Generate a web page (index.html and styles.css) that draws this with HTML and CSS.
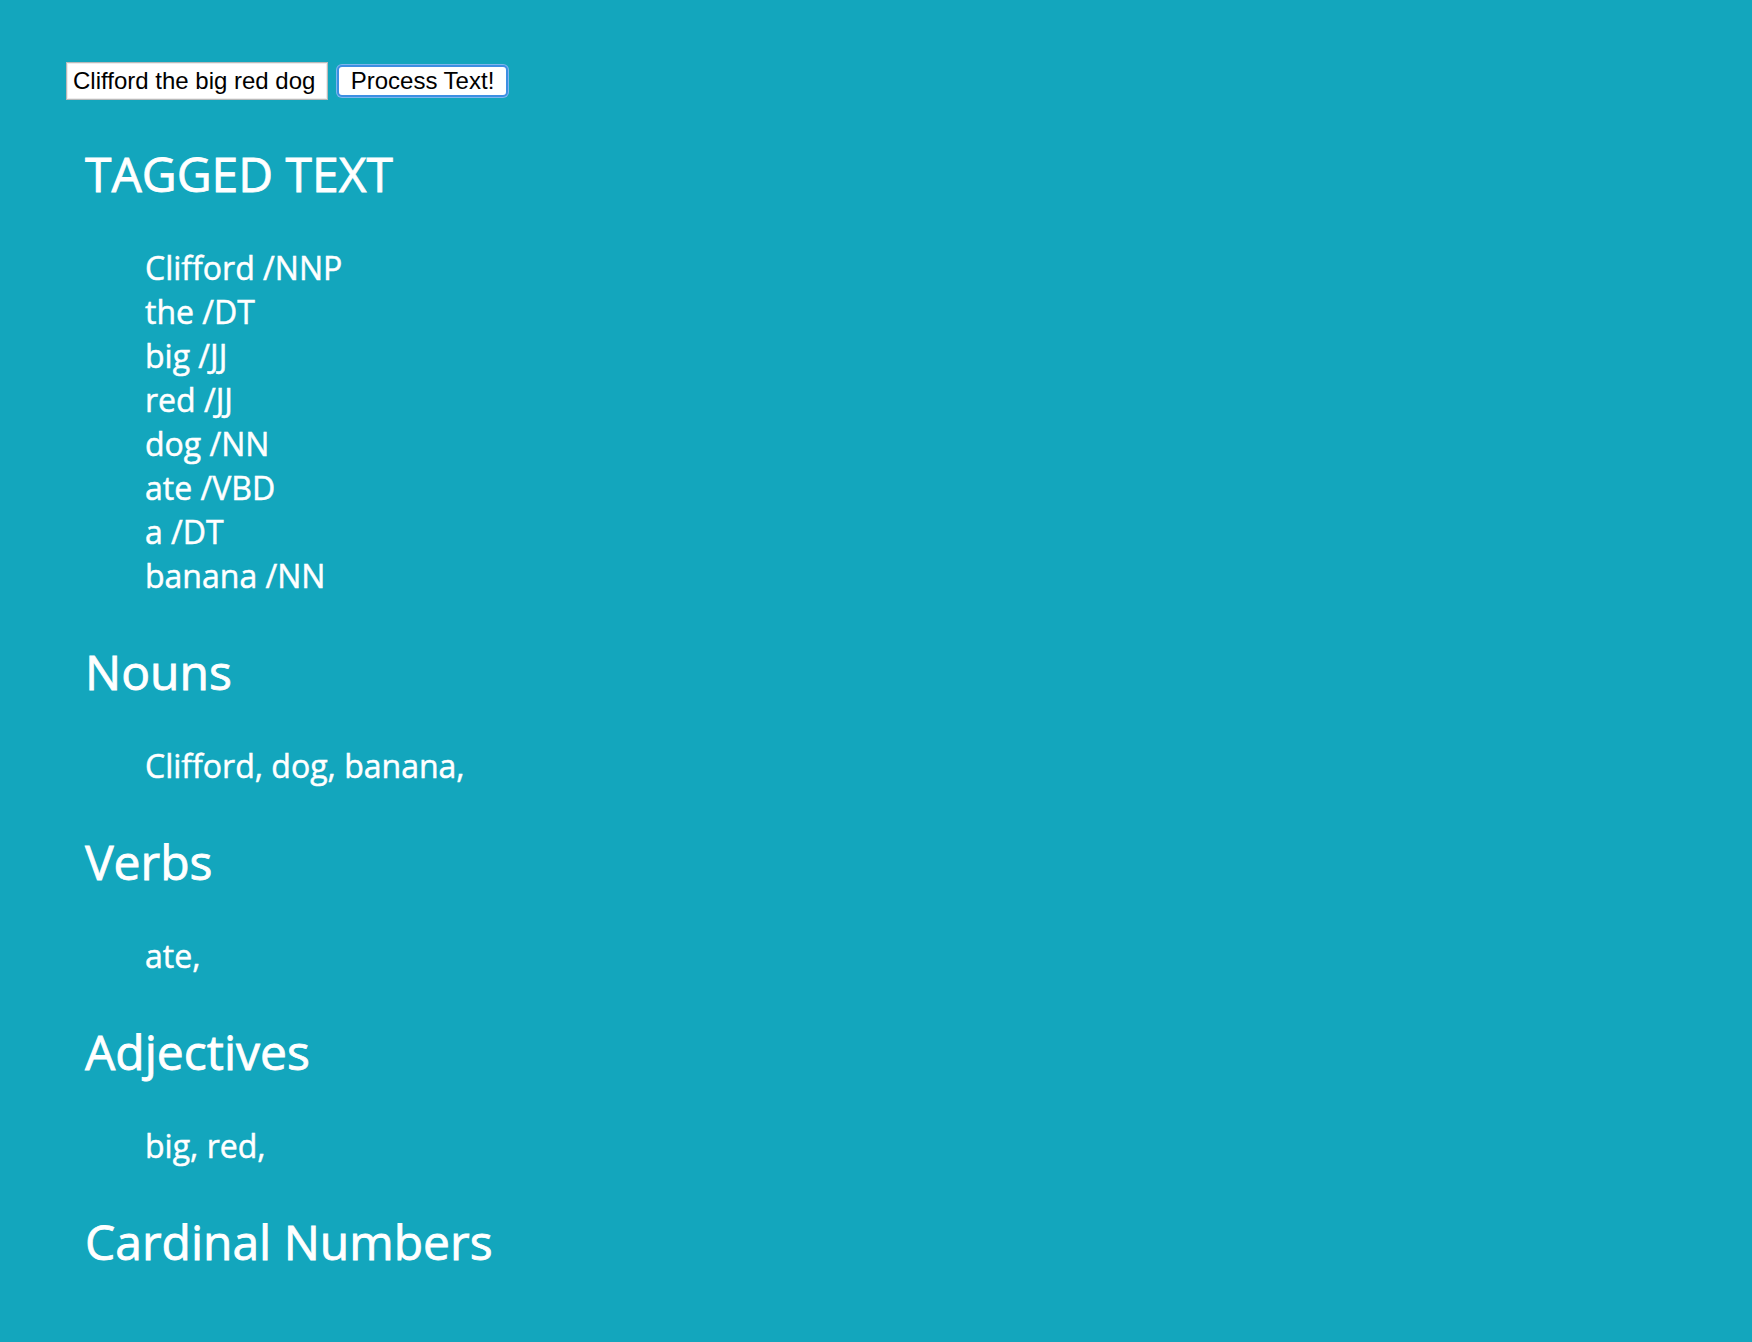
FILE: index.html
```html
<!DOCTYPE html>
<html lang="en">
<head>
<meta charset="utf-8">
<title>POS Tagger</title>
<link rel="stylesheet" href="styles.css">
</head>
<body>
<form class="form">
  <input class="text-input" type="text" value="Clifford the big red dog">
  <button class="btn" type="button">Process Text!</button>
</form>
<main class="results">
  <section class="section">
    <h2 class="heading">TAGGED TEXT</h2>
    <div class="content">
      <div class="line">Clifford /NNP</div>
      <div class="line">the /DT</div>
      <div class="line">big /JJ</div>
      <div class="line">red /JJ</div>
      <div class="line">dog /NN</div>
      <div class="line">ate /VBD</div>
      <div class="line">a /DT</div>
      <div class="line">banana /NN</div>
    </div>
  </section>
  <section class="section">
    <h2 class="heading">Nouns</h2>
    <div class="content"><div class="line">Clifford, dog, banana,</div></div>
  </section>
  <section class="section">
    <h2 class="heading">Verbs</h2>
    <div class="content"><div class="line">ate,</div></div>
  </section>
  <section class="section">
    <h2 class="heading">Adjectives</h2>
    <div class="content"><div class="line">big, red,</div></div>
  </section>
  <section class="section">
    <h2 class="heading">Cardinal Numbers</h2>
  </section>
</main>
</body>
</html>
```

FILE: styles.css
```css
html, body {
  margin: 0;
  padding: 0;
}
body {
  background: #13a6bd;
  color: #ffffff;
  font-family: "Open Sans", "Noto Sans", sans-serif;
  min-height: 1342px;
}
.form {
  display: flex;
  align-items: center;
  gap: 9px;
  padding: 62px 0 0 66px;
  margin: 0;
}
.text-input {
  box-sizing: border-box;
  width: 262px;
  height: 38px;
  padding: 0 6px;
  border: 1px solid #b9b9b9;
  box-shadow: inset 0 0 0 1px #ececec;
  background: #fff;
  color: #000;
  font-family: "Liberation Sans", Arial, sans-serif;
  font-size: 24px;
  outline: none;
}
.btn {
  box-sizing: border-box;
  width: 171px;
  height: 32px;
  padding: 0;
  border: 2px solid #3d8fe3;
  border-radius: 5px;
  box-shadow: 0 0 0 1px #7fb6ee;
  background: #fff;
  color: #000;
  font-family: "Liberation Sans", Arial, sans-serif;
  font-size: 24px;
  line-height: 28px;
}
.results {
  padding: 40px 0 0 85px;
  -webkit-text-stroke: 0.5px #ffffff;
}
.section {
  margin: 0;
}
.heading {
  margin: 0 0 38px 0;
  font-size: 48px;
  font-weight: 400;
  line-height: 68px;
  -webkit-text-stroke: 0.8px #ffffff;
}
.content {
  margin: 0 0 40px 60px;
  font-size: 32px;
  line-height: 44px;
}
.line {
  margin: 0;
}
```
